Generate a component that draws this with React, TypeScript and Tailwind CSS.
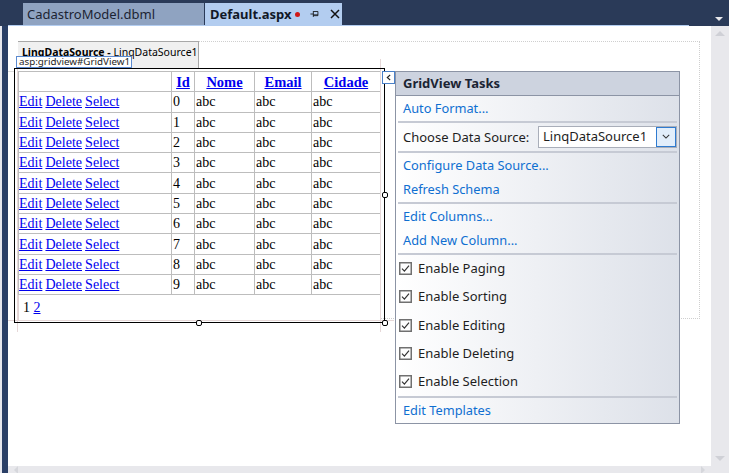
const rows = [0, 1, 2, 3, 4, 5, 6, 7, 8, 9];
const options = ['Enable Paging', 'Enable Sorting', 'Enable Editing', 'Enable Deleting', 'Enable Selection'];

const linkClass = 'text-[#0000ee] underline';
const cellClass = 'border border-[#bdbdbd] px-[1px] pb-0 pt-[1px] text-left align-middle';
const headClass = 'border border-[#bdbdbd] px-0 pb-0 pt-[1px] text-center align-middle text-[14.5px] font-bold';

const Sep = () => <div className="mx-[2px] h-[2px] shrink-0 bg-[#c6cad4]" />;

const TaskLink = ({ label }: { label: string }) => (
  <div className="flex h-[24.5px] shrink-0 items-center pl-[7px] pt-[1px] text-[12.8px] text-[#0f6fd1]">{label}</div>
);

const Handle = ({ className }: { className: string }) => (
  <span className={`absolute h-[6px] w-[6px] rounded-[2px] border border-black bg-white ${className}`} />
);

const GridTable = () => (
  <table className="w-[362px] table-fixed border-collapse bg-white font-['Liberation_Serif',serif] text-[14px] leading-none text-black">
    <colgroup>
      <col className="w-[153px]" />
      <col className="w-[23px]" />
      <col className="w-[60px]" />
      <col className="w-[57px]" />
      <col className="w-[69px]" />
    </colgroup>
    <tbody>
      <tr className="h-[20.3px]">
        <td className={cellClass} />
        {['Id', 'Nome', 'Email', 'Cidade'].map((h) => (
          <td key={h} className={headClass}>
            <span className={linkClass}>{h}</span>
          </td>
        ))}
      </tr>
      {rows.map((n) => (
        <tr key={n} className="h-[20.3px]">
          <td className="border border-[#bdbdbd] px-0 pb-0 pt-[1px] text-left align-middle [word-spacing:-0.4px]">
            <span className={linkClass}>Edit</span> <span className={linkClass}>Delete</span>{' '}
            <span className={linkClass}>Select</span>
          </td>
          <td className={cellClass}>{n}</td>
          <td className={cellClass}>abc</td>
          <td className={cellClass}>abc</td>
          <td className={cellClass}>abc</td>
        </tr>
      ))}
      <tr className="h-[26px]">
        <td colSpan={5} className="border border-[#e0d4d4] border-t-[#d8d8d8] pl-[4px] align-middle">
          1 <span className={linkClass}>2</span>
        </td>
      </tr>
    </tbody>
  </table>
);

const TasksPanel = () => (
  <div className="absolute left-[387px] top-[45px] flex h-[353px] w-[285px] flex-col border border-[#8c94a5] bg-gradient-to-r from-white to-[#dde1e9] font-['Noto_Sans',sans-serif] text-[13px] leading-none text-[#1e1e1e]">
    <div className="flex h-[24px] shrink-0 items-center border-b border-[#8c94a5] bg-[#cdd3df] pl-[7px] font-bold text-[#1b2433]">
      GridView Tasks
    </div>
    <TaskLink label="Auto Format..." />
    <Sep />
    <div className="flex h-[28px] shrink-0 items-center justify-between pl-[7px] pr-[2px]">
      <span className="mt-[1px]">Choose Data Source:</span>
      <div className="flex h-[22px] w-[139px] items-center justify-between border border-[#a9aeb9] bg-white pl-[4px]">
        LinqDataSource1
        <span className="flex h-[20px] w-[20px] items-center justify-center border border-[#2f7bd0] bg-[#e2eefb]">
          <svg viewBox="0 0 10 6" className="h-[5px] w-[8px]" fill="none" stroke="#333" strokeWidth={1.3}>
            <path d="M1 1l4 4 4-4" />
          </svg>
        </span>
      </div>
    </div>
    <Sep />
    <TaskLink label="Configure Data Source..." />
    <TaskLink label="Refresh Schema" />
    <Sep />
    <TaskLink label="Edit Columns..." />
    <TaskLink label="Add New Column..." />
    <Sep />
    <div className="flex h-[141px] shrink-0 flex-col">
      {options.map((o) => (
        <div key={o} className="flex flex-1 items-center gap-[6px] pl-[3px]">
          <svg viewBox="0 0 13 13" className="h-[13px] w-[13px] shrink-0" fill="none">
            <rect x="0.75" y="0.75" width="11.5" height="11.5" fill="#fff" fillOpacity={0.4} stroke="#707070" strokeWidth={1.5} />
            <path d="M3 6.6l2.4 2.5 4.6-5.4" stroke="#333" strokeWidth={1.2} />
          </svg>
          <span>{o}</span>
        </div>
      ))}
    </div>
    <Sep />
    <TaskLink label="Edit Templates" />
  </div>
);

export default function App() {
  return (
    <div className="flex h-[473px] w-[729px] flex-col overflow-hidden bg-[#2a3a58] font-['Noto_Sans',sans-serif]">
      {/* document tabs */}
      <div className="relative flex h-[25px] shrink-0 items-end pl-[23px]">
        <div className="flex h-[22px] w-[181px] items-center bg-[#8fa3c1] pl-[4px] text-[13px] leading-none text-[#1c2433]">
          CadastroModel.dbml
        </div>
        <div className="ml-[1px] flex h-[22px] w-[137px] items-center bg-[#b3cdf0] pl-[5px] text-[13px] font-bold leading-none text-[#111827]">
          Default.aspx
          <span className="ml-[3px] h-[5px] w-[5px] rounded-full bg-[#d01818]" />
          <svg viewBox="0 0 12 12" className="ml-[10px] h-[10px] w-[10px]" fill="none" stroke="#111" strokeWidth={1}>
            <path d="M0.5 6h3.5M4 2.5v7M4 3h5.5v5H4M4 7h5.5" />
          </svg>
          <svg viewBox="0 0 10 10" className="ml-[10px] h-[10px] w-[10px]" fill="none" stroke="#111" strokeWidth={1.5}>
            <path d="M1 1l8 8M9 1l-8 8" />
          </svg>
        </div>
        <span className="absolute right-[6px] top-[17px] h-0 w-0 border-x-[4px] border-t-[4px] border-x-transparent border-t-[#e8e8ec]" />
      </div>
      <div className="h-[1px] w-[681px] shrink-0 translate-x-[8px] bg-[#b3cdf0]" />

      <div className="flex min-h-0 flex-1">
        <div className="w-[2px] shrink-0 bg-[#e6e7ed]" />
        <div className="w-[6px] shrink-0 bg-[#2a3f66]" />
        <div className="flex min-w-0 flex-1 flex-col">
          <div className="flex min-h-0 flex-1">
            {/* design surface */}
            <div className="relative min-w-0 flex-1 bg-white pl-[10px] pt-[45px]">
              <div className="absolute left-[10px] top-[15px] h-[278px] w-[682px] border-y border-r border-dotted border-[#cfcfcf]" />
              <div className="absolute left-0 top-[45px] h-[1px] w-[6px] bg-[#dcdcdc]" />
              <div className="absolute left-[10px] top-[15px] h-[28px] w-[181px] overflow-hidden whitespace-nowrap border-r border-t border-[#a8a8a8] bg-[#f0f0f0] pl-[4px] pt-[5px] text-[10.5px] leading-none text-black">
                <span className="font-bold">LinqDataSource -</span> LinqDataSource1
              </div>
              <div className="relative w-fit">
                <GridTable />
              </div>
              {/* design time guides */}
              <div className="absolute left-0 top-[294px] h-[1px] w-[386px] bg-[#e6d8d8]" />
              <div className="absolute left-[9px] top-[33px] h-[273px] w-[1px] bg-[#e6d8d8]" />
              <div className="absolute left-[372px] top-[33px] h-[273px] w-[1px] bg-[#e6d8d8]" />
              {/* selection frame */}
              <div className="pointer-events-none absolute left-[6px] top-[42px] h-[255px] w-[371px] border-[1.5px] border-black">
                <Handle className="bottom-[-4px] left-[181px]" />
                <Handle className="bottom-[-4px] right-[-4px]" />
                <Handle className="right-[-4px] top-[123px]" />
              </div>
              <div className="absolute left-[8px] top-[30px] flex h-[12px] w-[116px] items-center border border-[#5b8ad0] bg-white pl-[2px] text-[9.8px] leading-none text-[#1e1e1e]">
                asp:gridview#GridView1
              </div>
              <div className="absolute left-[374px] top-[45px] flex h-[13px] w-[13px] items-center justify-center border border-[#4a80c8] bg-white">
                <svg viewBox="0 0 6 8" className="h-[7px] w-[5px]" fill="none" stroke="#222" strokeWidth={1.3}>
                  <path d="M5 1L1.5 4 5 7" />
                </svg>
              </div>
              <TasksPanel />
            </div>
            {/* vertical scrollbar */}
            <div className="flex w-[18px] shrink-0 flex-col items-center justify-between bg-[#e8e8ec] py-[5px]">
              <span className="h-0 w-0 border-x-[5px] border-b-[5px] border-x-transparent border-b-[#cfd0d6]" />
              <span className="h-0 w-0 border-x-[5px] border-t-[5px] border-x-transparent border-t-[#cfd0d6]" />
            </div>
          </div>
          {/* horizontal scrollbar */}
          <div className="flex h-[7px] shrink-0 items-center justify-between bg-[#e8e8ec] pl-[6px] pr-[24px]">
            <span className="h-0 w-0 border-y-[4px] border-r-[4px] border-y-transparent border-r-[#d6d7dc]" />
            <span className="h-0 w-0 border-y-[4px] border-l-[4px] border-y-transparent border-l-[#d6d7dc]" />
          </div>
        </div>
      </div>
    </div>
  );
}
